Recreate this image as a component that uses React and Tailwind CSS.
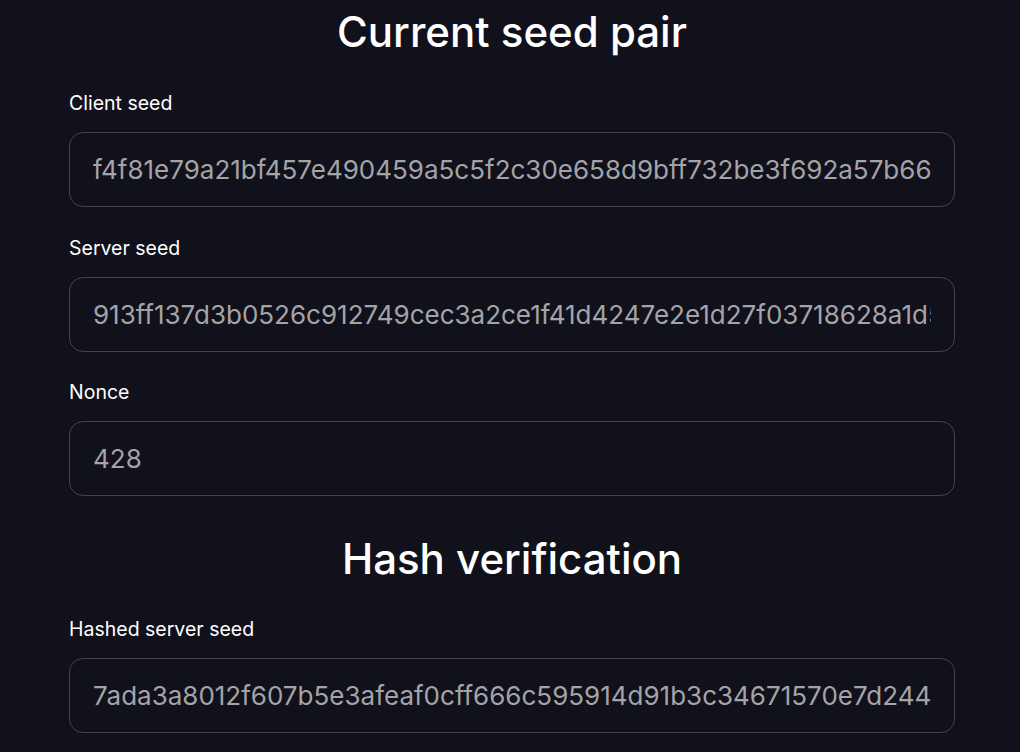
import React from 'react';

const fields = [
  { label: 'Client seed', value: 'f4f81e79a21bf457e490459a5c5f2c30e658d9bff732be3f692a57b66c1d0a4e' },
  { label: 'Server seed', value: '913ff137d3b0526c912749cec3a2ce1f41d4247e2e1d27f03718628a1d5b6c90' },
  { label: 'Nonce', value: '428' },
];

const Field = ({ label, value, className = '' }) => (
  <div className={`flex flex-col ${className}`}>
    <label className="text-[19.5px] leading-[24px] text-white">{label}</label>
    <input
      readOnly
      value={value}
      className="mt-[17px] h-[75px] w-full rounded-[14px] border border-[#44444c] bg-[#11111b] px-[23px] text-[26px] text-[#a3a3a8] outline-none"
      style={{ fontFamily: 'Inter, sans-serif' }}
    />
  </div>
);

export default function App() {
  return (
    <div className="min-h-screen bg-[#11111b] pl-[69px] pr-[65px] pt-[7px] text-white" style={{ fontFamily: 'Inter, sans-serif' }}>
      <h1 className="text-center text-[42px] font-medium leading-[50px]">Current seed pair</h1>
      <div className="mt-[34px] flex flex-col">
        {fields.map((f, i) => (
          <Field key={f.label} label={f.label} value={f.value} className={i > 0 ? 'mt-[28.5px]' : ''} />
        ))}
      </div>
      <h2 className="mt-[38px] text-center text-[42px] font-medium leading-[50px]">Hash verification</h2>
      <Field className="mt-[33px]" label="Hashed server seed" value="7ada3a8012f607b5e3afeaf0cff666c595914d91b3c34671570e7d2449b1f3ac" />
    </div>
  );
}
